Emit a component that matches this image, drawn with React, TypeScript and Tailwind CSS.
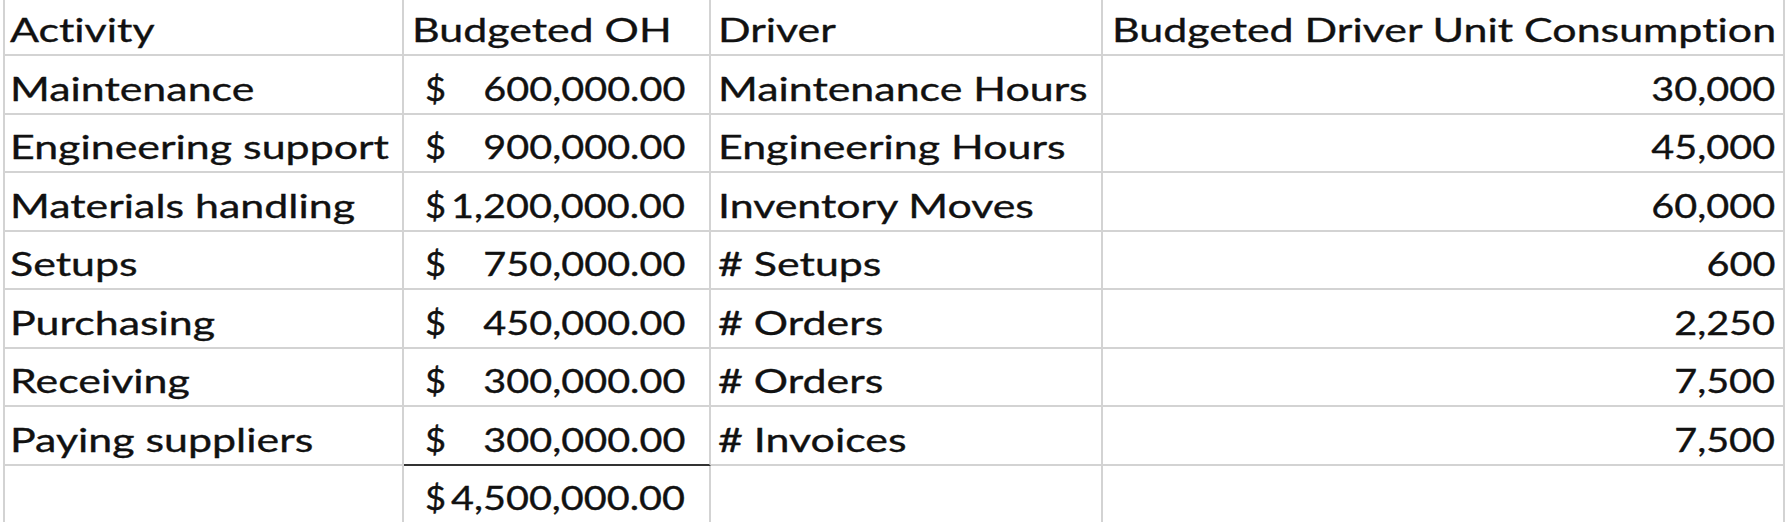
const rows = [
  { activity: 'Maintenance', oh: '600,000.00', driver: 'Maintenance Hours', units: '30,000' },
  { activity: 'Engineering support', oh: '900,000.00', driver: 'Engineering Hours', units: '45,000' },
  { activity: 'Materials handling', oh: '1,200,000.00', driver: 'Inventory Moves', units: '60,000' },
  { activity: 'Setups', oh: '750,000.00', driver: '# Setups', units: '600' },
  { activity: 'Purchasing', oh: '450,000.00', driver: '# Orders', units: '2,250' },
  { activity: 'Receiving', oh: '300,000.00', driver: '# Orders', units: '7,500' },
  { activity: 'Paying suppliers', oh: '300,000.00', driver: '# Invoices', units: '7,500' },
]

const grid = 'grid grid-cols-[399px_307px_392px_682px]'
const cell = 'flex items-end border-r-2 border-b-2 border-[#d3d3d3] pb-[8px]'

// the sheet was captured stretched sideways, so text is widened to match
function T({ children }: { children: React.ReactNode }) {
  return <span className="inline-block origin-left scale-x-[1.3] whitespace-pre">{children}</span>
}

function N({ children }: { children: React.ReactNode }) {
  return <span className="inline-block origin-right scale-x-[1.2] whitespace-pre">{children}</span>
}

function Money({ value }: { value: string }) {
  return (
    <div className="flex w-full justify-between pl-[21px] pr-[24px]">
      <span className="inline-block origin-left scale-x-[1.1]">$</span>
      <N>{value}</N>
    </div>
  )
}

export default function App() {
  return (
    <div
      className="h-[522px] w-[1788px] overflow-hidden bg-white text-[33px] leading-none text-[#111] [-webkit-text-stroke:0.35px_#111] [font-variant-ligatures:none]"
      style={{ fontFamily: 'Lato, "Open Sans", sans-serif' }}
    >
      <div className="ml-[3px] border-l-2 border-[#d3d3d3]">
        {/* header */}
        <div className={`${grid} h-[56px]`}>
          <div className={`${cell} pl-[5px]`}><T>Activity</T></div>
          <div className={`${cell} pl-[8px]`}><T>Budgeted OH</T></div>
          <div className={`${cell} pl-[7px]`}><T>Driver</T></div>
          <div className={`${cell} pl-[9px]`}><T>Budgeted Driver Unit Consumption</T></div>
        </div>

        {rows.map((r, i) => (
          <div key={i} className={`${grid} h-[58.5px]`}>
            <div className={`${cell} pl-[5px]`}><T>{r.activity}</T></div>
            <div className={`${cell} ${i === rows.length - 1 ? 'border-b-[#333]' : ''}`}>
              <Money value={r.oh} />
            </div>
            <div className={`${cell} pl-[7px]`}><T>{r.driver}</T></div>
            <div className={`${cell} justify-end pr-[8px]`}><N>{r.units}</N></div>
          </div>
        ))}

        {/* total */}
        <div className={`${grid} h-[58.5px]`}>
          <div className={cell} />
          <div className={cell}><Money value="4,500,000.00" /></div>
          <div className={cell} />
          <div className={cell} />
        </div>
      </div>
    </div>
  )
}
